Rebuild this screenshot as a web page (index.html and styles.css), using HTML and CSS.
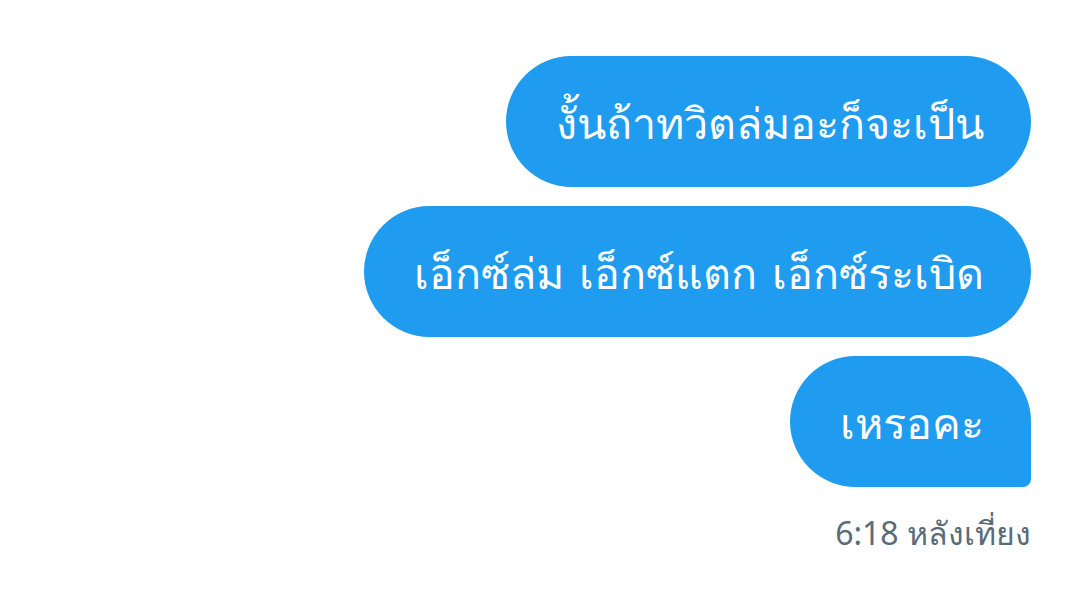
FILE: index.html
```html
<!DOCTYPE html>
<html>
<head>
  <meta charset="utf-8">
  <title>Messages</title>
  <link rel="stylesheet" href="styles.css">
</head>
<body>
  <div class="conversation">
    <div class="bubble">งั้นถ้าทวิตล่มอะก็จะเป็น</div>
    <div class="bubble">เอ็กซ์ล่ม เอ็กซ์แตก เอ็กซ์ระเบิด</div>
    <div class="bubble last">เหรอคะ</div>
    <div class="timestamp">6:18 หลังเที่ยง</div>
  </div>
</body>
</html>
```

FILE: styles.css
```css
/* basic style */
body {
  margin: 0;
  background: #ffffff;
  font-family: "Noto Sans", "DejaVu Sans", sans-serif;
}

.conversation {
  display: flex;
  flex-direction: column;
  align-items: flex-end;
  gap: 19px;
  padding: 56px 49px 0 0;
}

/* message bubbles */
.bubble {
  background: #1F9BEF;
  color: #ffffff;
  font-size: 43px;
  line-height: 134px;
  height: 131px;
  padding: 0 47px 0 50px;
  border-radius: 66px;
  box-sizing: border-box;
  white-space: nowrap;
  word-spacing: 4px;
}

.bubble.last {
  border-bottom-right-radius: 8px;
}

.timestamp {
  color: #5B6B78;
  font-size: 32px;
  margin-top: 2px;
}
```
